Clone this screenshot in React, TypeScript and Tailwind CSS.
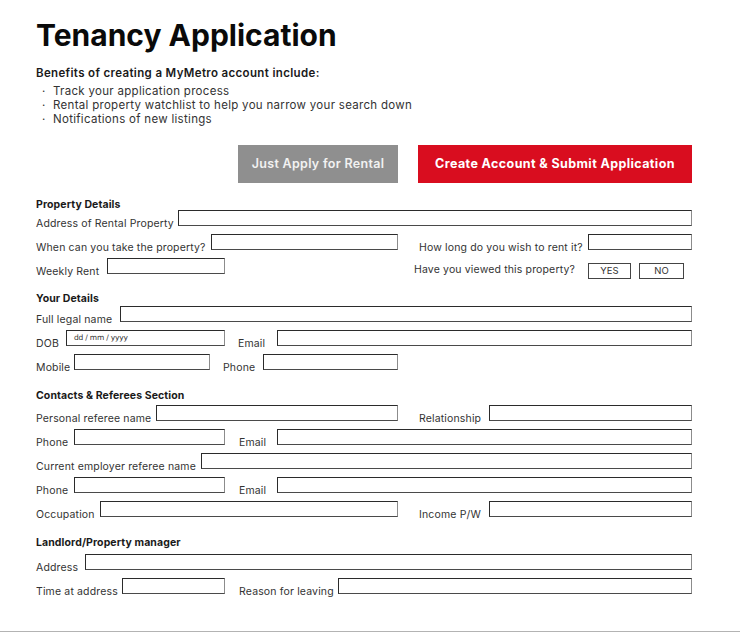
import React from "react";

// Plain field box used all over the form
function Box({ className = "", children }: { className?: string; children?: React.ReactNode }) {
  return (
    <div
      className={`h-4 border border-[#2b2b2b] border-r-[#8c8c8c] border-b-[#4a4a4a] bg-white ${className}`}
    >
      {children}
    </div>
  );
}

function Label({ children, className = "" }: { children: React.ReactNode; className?: string }) {
  return (
    <span
      className={`shrink-0 whitespace-nowrap pt-[8px] text-[10.5px] leading-3 tracking-[0.15px] text-[#333] ${className}`}
    >
      {children}
    </span>
  );
}

function Row({ children }: { children: React.ReactNode }) {
  return <div className="flex h-4 items-start">{children}</div>;
}

function SectionTitle({ children, className = "" }: { children: React.ReactNode; className?: string }) {
  return (
    <h3 className={`text-[10.5px] font-bold leading-[11px] tracking-[0.1px] text-[#1a1a1a] ${className}`}>
      {children}
    </h3>
  );
}

export default function App() {
  const benefits = [
    "Track your application process",
    "Rental property watchlist to help you narrow your search down",
    "Notifications of new listings",
  ];

  return (
    <div className="h-[632px] w-[740px] border-b border-[#b3b3b3] bg-white pl-[36px] pr-[48px] font-['Inter',sans-serif] text-[#222]">
      {/* Heading */}
      <h1 className="pt-[17px] text-[30px] font-bold leading-[36px] text-[#0a0a0a]">Tenancy Application</h1>

      <p className="mt-[13px] text-[11.5px] font-semibold leading-[14px] tracking-[0.35px] text-[#1a1a1a]">
        Benefits of creating a MyMetro account include:
      </p>
      <ul className="mt-[4px] text-[11.5px] leading-[14px] tracking-[0.3px] text-[#333]">
        {benefits.map((b) => (
          <li key={b} className="flex">
            <span className="w-[17px] pl-[6px]">·</span>
            <span>{b}</span>
          </li>
        ))}
      </ul>

      {/* Actions */}
      <div className="mt-[19px] flex justify-end gap-[20px]">
        <button className="h-[38px] w-[160px] bg-[#8f8f8f] text-[12.5px] font-semibold tracking-[0.3px] text-[#f2f2f2]">
          Just Apply for Rental
        </button>
        <button className="h-[38px] w-[274px] bg-[#d90d1f] text-[12.5px] font-bold tracking-[0.4px] text-white">
          Create Account &amp; Submit Application
        </button>
      </div>

      {/* Property Details */}
      <SectionTitle className="mt-[16px]">Property Details</SectionTitle>
      <div className="space-y-2">
        <Row>
          <Label className="w-[142px]">Address of Rental Property</Label>
          <Box className="flex-1" />
        </Row>
        <Row>
          <Label className="w-[175px]">When can you take the property?</Label>
          <Box className="w-[187px]" />
          <Label className="ml-[21px] w-[169px]">How long do you wish to rent it?</Label>
          <Box className="flex-1" />
        </Row>
        <Row>
          <Label className="w-[71px]">Weekly Rent</Label>
          <Box className="w-[118px]" />
          <div className="ml-[189px] mt-[5px] flex items-start">
            <span className="w-[174px] whitespace-nowrap pt-px text-[10.5px] leading-3 tracking-[0.15px] text-[#333]">
              Have you viewed this property?
            </span>
            <button className="h-4 w-[43px] border border-[#444] text-[9.5px] leading-[14px] text-[#333]">YES</button>
            <button className="ml-[8px] h-4 w-[45px] border border-[#444] text-[9.5px] leading-[14px] text-[#333]">
              NO
            </button>
          </div>
        </Row>
      </div>

      {/* Your Details */}
      <SectionTitle className="mt-[19px]">Your Details</SectionTitle>
      <div className="mt-[2px] space-y-2">
        <Row>
          <Label className="w-[84px]">Full legal name</Label>
          <Box className="flex-1" />
        </Row>
        <Row>
          <Label className="w-[30px]">DOB</Label>
          <Box className="w-[159px] pl-[7px]">
            <span className="block font-['DejaVu_Sans',sans-serif] text-[7.5px] leading-[13px] tracking-[-0.2px] text-[#333]">
              dd / mm / yyyy
            </span>
          </Box>
          <Label className="ml-[13px] w-[39px]">Email</Label>
          <Box className="flex-1" />
        </Row>
        <Row>
          <Label className="w-[38px]">Mobile</Label>
          <Box className="w-[136px]" />
          <Label className="ml-[13px] w-[40px]">Phone</Label>
          <Box className="w-[135px]" />
        </Row>
      </div>

      {/* Contacts & Referees */}
      <SectionTitle className="mt-[20px]">Contacts &amp; Referees Section</SectionTitle>
      <div className="mt-[4px] space-y-2">
        <Row>
          <Label className="w-[120px]">Personal referee name</Label>
          <Box className="w-[242px]" />
          <Label className="ml-[21px] w-[70px]">Relationship</Label>
          <Box className="flex-1" />
        </Row>
        <Row>
          <Label className="w-[38px]">Phone</Label>
          <Box className="w-[151px]" />
          <Label className="ml-[14px] w-[38px]">Email</Label>
          <Box className="flex-1" />
        </Row>
        <Row>
          <Label className="w-[165px]">Current employer referee name</Label>
          <Box className="flex-1" />
        </Row>
        <Row>
          <Label className="w-[38px]">Phone</Label>
          <Box className="w-[151px]" />
          <Label className="ml-[14px] w-[38px]">Email</Label>
          <Box className="flex-1" />
        </Row>
        <Row>
          <Label className="w-[64px]">Occupation</Label>
          <Box className="w-[298px]" />
          <Label className="ml-[21px] w-[70px]">Income P/W</Label>
          <Box className="flex-1" />
        </Row>
      </div>

      {/* Landlord */}
      <SectionTitle className="mt-[20px]">Landlord/Property manager</SectionTitle>
      <div className="mt-[6px] space-y-2">
        <Row>
          <Label className="w-[49px]">Address</Label>
          <Box className="flex-1" />
        </Row>
        <Row>
          <Label className="w-[86px]">Time at address</Label>
          <Box className="w-[103px]" />
          <Label className="ml-[14px] w-[99px]">Reason for leaving</Label>
          <Box className="flex-1" />
        </Row>
      </div>
    </div>
  );
}
